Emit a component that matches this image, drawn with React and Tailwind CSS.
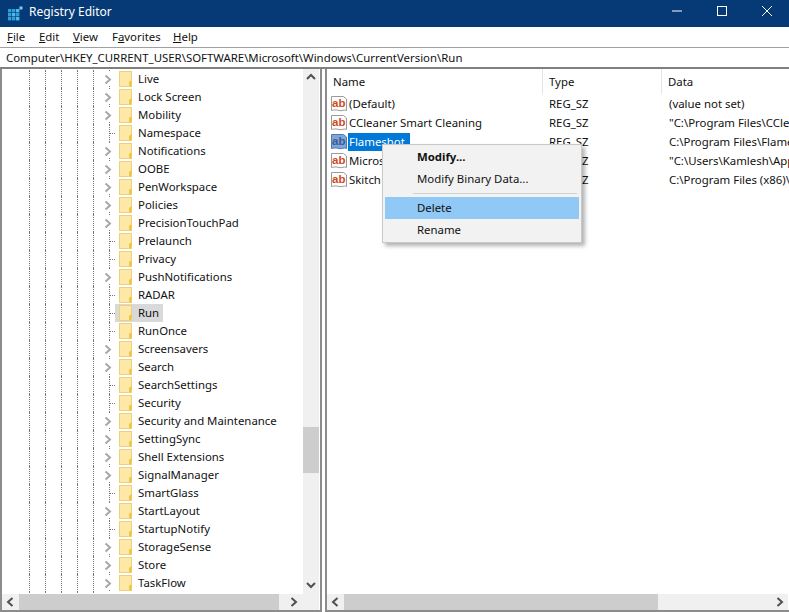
const tree = [
  ["Live", 1], ["Lock Screen", 1], ["Mobility", 1], ["Namespace", 0], ["Notifications", 1],
  ["OOBE", 1], ["PenWorkspace", 1], ["Policies", 1], ["PrecisionTouchPad", 1], ["Prelaunch", 0],
  ["Privacy", 0], ["PushNotifications", 1], ["RADAR", 0], ["Run", 0], ["RunOnce", 0],
  ["Screensavers", 1], ["Search", 1], ["SearchSettings", 0], ["Security", 0],
  ["Security and Maintenance", 1], ["SettingSync", 1], ["Shell Extensions", 1], ["SignalManager", 1],
  ["SmartGlass", 0], ["StartLayout", 1], ["StartupNotify", 0], ["StorageSense", 1], ["Store", 1], ["TaskFlow", 1],
];

const values = [
  ["(Default)", "REG_SZ", "(value not set)"],
  ["CCleaner Smart Cleaning", "REG_SZ", "\"C:\\Program Files\\CCleaner\\CCleaner64.exe\" /MONITOR"],
  ["Flameshot", "REG_SZ", "C:\\Program Files\\Flameshot\\bin\\flameshot.exe"],
  ["Microsoft Edge Update", "REG_SZ", "\"C:\\Users\\Kamlesh\\AppData\\Local\\Microsoft\\Edge\""],
  ["Skitch", "REG_SZ", "C:\\Program Files (x86)\\Skitch\\Skitch.exe"],
];

function AppIcon() {
  return (
    <svg width="15" height="15" viewBox="0 0 15 15">
      <rect x="0" y="3" width="3.4" height="3.4" fill="#2f9fd8" />
      <rect x="4" y="3" width="3.4" height="3.4" fill="#2f9fd8" />
      <rect x="8" y="3" width="3.4" height="3.4" fill="#4fb8e8" />
      <rect x="0" y="7" width="3.4" height="3.4" fill="#2f9fd8" />
      <rect x="4" y="7" width="3.4" height="3.4" fill="#4fb8e8" />
      <rect x="8" y="7" width="3.4" height="3.4" fill="#2f9fd8" />
      <rect x="0" y="11" width="3.4" height="3.4" fill="#2f9fd8" />
      <rect x="4" y="11" width="3.4" height="3.4" fill="#2f9fd8" />
      <rect x="8" y="11" width="3.4" height="3.4" fill="#4fb8e8" />
      <rect x="11.5" y="0.5" width="3" height="3" fill="#7fd0f2" />
    </svg>
  );
}

function Folder() {
  return (
    <svg width="13" height="16" viewBox="0 0 13 16" className="shrink-0">
      <rect x="0.5" y="0.5" width="12" height="15" fill="#fde8a6" stroke="#ecd081" />
      <path d="M10 15V11L12.5 9V15Z" fill="#f2c53d" />
    </svg>
  );
}

function Chevron() {
  return (
    <svg width="9" height="18" viewBox="0 0 9 18" className="-ml-[5px] mr-[2px] shrink-0">
      <path d="M1.5 5.5L6 9.5L1.5 13.5" fill="none" stroke="#a8a8a8" strokeWidth="2" />
      <path d="M5.5 0V2M5.5 16V18" stroke="#777" strokeDasharray="1 1" />
    </svg>
  );
}

function Guides() {
  return (
    <>
      <span className="w-4 self-stretch border-l border-dotted border-[#777]" />
      <span className="w-4 self-stretch border-l border-dotted border-[#777]" />
      <span className="w-4 self-stretch border-l border-dotted border-[#777]" />
      <span className="w-4 self-stretch border-l border-dotted border-[#777]" />
      <span className="w-4 self-stretch border-l border-dotted border-[#777]" />
    </>
  );
}

function TreeRow({ name, expandable }) {
  const active = name === "Run";
  return (
    <div className="flex h-[18px] items-center pl-[27px]">
      <Guides />
      {expandable ? (
        <Chevron />
      ) : (
        <span className="flex h-full w-[6px] items-center border-l border-dotted border-[#777]">
          <span className="w-[6px] border-t border-dotted border-[#777]" />
        </span>
      )}
      <span className={"flex h-[18px] items-center gap-[6px] pl-1 pr-1 " + (active ? "bg-[#d9d9d9]" : "")}>
        <Folder />
        <span className="whitespace-nowrap">{name}</span>
      </span>
    </div>
  );
}

function AbIcon({ selected }) {
  return (
    <svg width="16" height="17" viewBox="0 0 16 17" className="shrink-0">
      <path
        d="M0.5 1.5H12.5L15.5 4V15.5C13 14 11 16.5 8 15.5C5 14.5 3 15 0.5 15.5Z"
        fill={selected ? "#7ea6d6" : "#fff"}
        stroke={selected ? "#4a7ab5" : "#9a9a9a"}
      />
      <text x="1" y="11.5" fontSize="11.5" fontWeight="700" fontFamily="'Liberation Sans', sans-serif" fill={selected ? "#3d5a98" : "#cf4a1f"}>
        ab
      </text>
    </svg>
  );
}

function ArrowLeft() {
  return (
    <svg width="17" height="16" viewBox="0 0 17 16">
      <path d="M10.5 4L6 8L10.5 12" fill="none" stroke="#505050" strokeWidth="2" />
    </svg>
  );
}

function ArrowRight() {
  return (
    <svg width="17" height="16" viewBox="0 0 17 16">
      <path d="M6.5 4L11 8L6.5 12" fill="none" stroke="#505050" strokeWidth="2" />
    </svg>
  );
}

function MenuItem({ label, hot, after, className }) {
  return (
    <span className={className}>
      {label}
      <span className="underline">{hot}</span>
      {after}
    </span>
  );
}

export default function App() {
  return (
    <div className="flex h-[612px] w-[789px] flex-col overflow-hidden bg-white text-[11.4px] leading-[18px] text-[#111] font-['Noto_Sans','Open_Sans',sans-serif]">
      {/* title bar */}
      <div className="flex h-[27px] shrink-0 items-center bg-[#053a77] pl-2 text-[12px] text-white">
        <AppIcon />
        <span className="ml-[6px] pb-[3px]">Registry Editor</span>
        <div className="ml-auto flex items-center gap-[34px] pb-[5px] pr-[17px]">
          <svg width="10" height="10" viewBox="0 0 10 10" className="mr-px">
            <path d="M0 5H10" stroke="#fff" />
          </svg>
          <svg width="10" height="10" viewBox="0 0 10 10" className="mr-px">
            <rect x="0.5" y="0.5" width="9" height="9" fill="none" stroke="#fff" />
          </svg>
          <svg width="10" height="10" viewBox="0 0 10 10">
            <path d="M0 0L10 10M10 0L0 10" stroke="#fff" />
          </svg>
        </div>
      </div>

      {/* menu bar */}
      <div className="flex h-5 shrink-0 items-center pl-[7px]">
        <MenuItem hot="F" after="ile" className="w-[32px]" />
        <MenuItem hot="E" after="dit" className="w-[34px]" />
        <MenuItem hot="V" after="iew" className="w-[39px]" />
        <MenuItem label="F" hot="a" after="vorites" className="w-[61px]" />
        <MenuItem hot="H" after="elp" />
      </div>

      {/* address bar */}
      <div className="flex h-[22px] shrink-0 items-center border-t border-b-2 border-t-[#a0a0a0] border-b-[#808080] pl-[6px]">
        Computer\HKEY_CURRENT_USER\SOFTWARE\Microsoft\Windows\CurrentVersion\Run
      </div>

      <div className="relative flex min-h-0 flex-1">
        {/* key tree */}
        <div className="flex w-[322px] shrink-0 flex-col border-b-2 border-l-2 border-r-2 border-[#8c8c8c] pr-px">
          <div className="flex min-h-0 flex-1">
            <div className="min-w-0 flex-1 overflow-hidden pt-px">
              {tree.map(([name, expandable]) => (
                <TreeRow key={name} name={name} expandable={expandable} />
              ))}
              <div className="flex h-[3px] pl-[27px]">
                <Guides />
              </div>
            </div>
            <div className="flex w-4 shrink-0 flex-col items-center bg-[#f0f0f0]">
              <svg width="16" height="17" viewBox="0 0 16 17" className="shrink-0">
                <path d="M4 10L8 6L12 10" fill="none" stroke="#505050" strokeWidth="2" />
              </svg>
              <div className="mt-[341px] h-[46px] w-full bg-[#cdcdcd]" />
              <svg width="16" height="17" viewBox="0 0 16 17" className="mt-auto shrink-0">
                <path d="M4 6L8 10L12 6" fill="none" stroke="#505050" strokeWidth="2" />
              </svg>
            </div>
          </div>
          <div className="flex h-4 shrink-0 items-center bg-[#f0f0f0]">
            <ArrowLeft />
            <div className="h-full w-[260px] bg-[#cdcdcd]" />
            <div className="ml-[6px]">
              <ArrowRight />
            </div>
          </div>
        </div>

        {/* value list */}
        <div className="ml-[3px] flex min-w-0 flex-1 flex-col border-b-2 border-l-2 border-[#8c8c8c]">
          <div className="flex h-[25px] shrink-0 items-center">
            <div className="flex h-full w-[216px] items-center border-r border-[#e5e5e5] pl-[6px]">Name</div>
            <div className="flex h-full w-[119px] items-center border-r border-[#e5e5e5] pl-[6px]">Type</div>
            <div className="pl-[6px]">Data</div>
          </div>
          <div className="min-h-0 flex-1 overflow-hidden">
            {values.map(([name, type, data]) => {
              const selected = name === "Flameshot";
              return (
                <div key={name} className="flex h-[19px] items-center">
                  <div className="flex w-[216px] shrink-0 items-center pl-[4px]">
                    <AbIcon selected={selected} />
                    <span className={"ml-px whitespace-nowrap pl-px " + (selected ? "bg-[#0078d7] pr-[5px] text-white" : "")}>{name}</span>
                  </div>
                  <div className="w-[120px] shrink-0 pl-[6px]">{type}</div>
                  <div className="whitespace-nowrap pl-[6px]">{data}</div>
                </div>
              );
            })}
          </div>
          <div className="mr-px flex h-4 shrink-0 items-center bg-[#f0f0f0]">
            <ArrowLeft />
            <div className="h-full w-[314px] bg-[#cdcdcd]" />
            <div className="ml-auto">
              <ArrowRight />
            </div>
          </div>
        </div>

        {/* context menu */}
        <div className="absolute left-[382px] top-[75px] flex h-[99px] w-[200px] flex-col border border-[#c8c8c8] bg-[#f2f2f2] px-[2px] py-px shadow-[3px_3px_4px_rgba(0,0,0,0.3)]">
          <div className="flex h-[22px] items-center pl-[32px] font-bold">Modify...</div>
          <div className="flex h-[22px] items-center pl-[32px]">Modify Binary Data...</div>
          <div className="my-[3px] ml-[28px] mr-[2px] border-t border-[#d0d0d0]" />
          <div className="flex h-[22px] items-center bg-[#90c8f6] pl-[32px]">Delete</div>
          <div className="flex h-[22px] items-center pl-[32px]">Rename</div>
        </div>
      </div>
    </div>
  );
}
